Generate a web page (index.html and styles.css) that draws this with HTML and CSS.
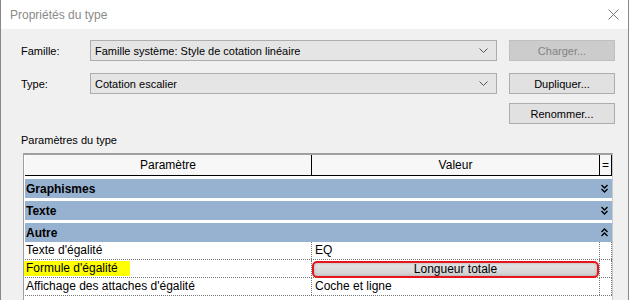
FILE: index.html
```html
<!DOCTYPE html>
<html lang="fr">
<head>
  <meta charset="UTF-8" />
  <title>Propriétés du type</title>
  <link rel="stylesheet" href="styles.css">
</head>
<body>

<div class="dialog">
  <!-- Title bar -->
  <div class="titlebar">
    <span class="title">Propriétés du type</span>
    <svg class="close" width="11" height="11" viewBox="0 0 11 11">
      <path d="M0.5 0.5 L10.5 10.5 M10.5 0.5 L0.5 10.5" stroke="#777" stroke-width="1" fill="none"/>
    </svg>
  </div>

  <div class="content">
    <!-- Family / type selection -->
    <div class="form">
      <label>Famille:</label>
      <div class="combo">
        <span>Famille système: Style de cotation linéaire</span>
        <svg width="9" height="5" viewBox="0 0 9 5"><path d="M0.5 0.5 L4.5 4.5 L8.5 0.5" stroke="#555" fill="none"/></svg>
      </div>
      <button class="button" disabled>Charger...</button>

      <label>Type:</label>
      <div class="combo">
        <span>Cotation escalier</span>
        <svg width="9" height="5" viewBox="0 0 9 5"><path d="M0.5 0.5 L4.5 4.5 L8.5 0.5" stroke="#555" fill="none"/></svg>
      </div>
      <button class="button">Dupliquer...</button>

      <span></span><span></span>
      <button class="button rename">Renommer...</button>
    </div>

    <div class="section-label">Paramètres du type</div>

    <!-- Property grid -->
    <div class="props">
      <div class="props-head">
        <div class="hcell">Paramètre</div>
        <div class="hcell">Valeur</div>
        <div class="hcell">=</div>
      </div>

      <div class="group">
        <span>Graphismes</span>
        <svg class="toggle" width="7" height="9" viewBox="0 0 7 9"><path d="M0.5 1 L3.5 4 L6.5 1 M0.5 5 L3.5 8 L6.5 5" stroke="#000" stroke-width="1.4" fill="none"/></svg>
      </div>
      <div class="group">
        <span>Texte</span>
        <svg class="toggle" width="7" height="9" viewBox="0 0 7 9"><path d="M0.5 1 L3.5 4 L6.5 1 M0.5 5 L3.5 8 L6.5 5" stroke="#000" stroke-width="1.4" fill="none"/></svg>
      </div>
      <div class="group">
        <span>Autre</span>
        <svg class="toggle" width="7" height="9" viewBox="0 0 7 9"><path d="M0.5 4 L3.5 1 L6.5 4 M0.5 8 L3.5 5 L6.5 8" stroke="#000" stroke-width="1.4" fill="none"/></svg>
      </div>

      <div class="row">
        <div class="cell">Texte d'égalité</div>
        <div class="cell value">EQ</div>
        <div class="cell"></div>
      </div>
      <div class="row">
        <div class="cell"><span class="marked">Formule d'égalité</span></div>
        <div class="cell"><div class="value-btn">Longueur totale</div></div>
        <div class="cell"></div>
      </div>
      <div class="row">
        <div class="cell">Affichage des attaches d'égalité</div>
        <div class="cell value">Coche et ligne</div>
        <div class="cell"></div>
      </div>
    </div>
  </div>
</div>

</body>
</html>
```

FILE: styles.css
```css
body {
  margin: 0;
  width: 629px;
  height: 300px;
  overflow: hidden;
  font-family: 'Liberation Sans', Arial, sans-serif;
  font-size: 11px;
  color: #000;
  background: #fff;
}
.dialog {
  width: 627px;
  height: 300px;
  overflow: hidden;
  border-left: 1px solid #888;
  border-right: 1px solid #888;
  background: #f0f0f0;
}
.titlebar {
  height: 29px;
  background: #fff;
  display: flex;
  align-items: center;
  justify-content: space-between;
  padding: 0 9px;
}
.title {
  color: #8a8a8a;
  font-size: 12px;
}
.content {
  padding: 11px 0 0 20px;
}
.form {
  display: grid;
  grid-template-columns: 69px 407px 118px;
  grid-template-rows: 21px 21px 21px;
  row-gap: 12px;
  align-items: center;
}
.combo {
  height: 21px;
  box-sizing: border-box;
  background: #e5e5e5;
  border: 1px solid #adadad;
  display: flex;
  align-items: center;
  justify-content: space-between;
  padding: 0 8px 0 4px;
}
.button {
  justify-self: end;
  width: 106px;
  height: 21px;
  box-sizing: border-box;
  background: #e1e1e1;
  border: 1px solid #adadad;
  font-family: inherit;
  font-size: 11px;
  color: #000;
  padding: 0;
}
.button:disabled {
  background: #cccccc;
  border-color: #bfbfbf;
  color: #838383;
}
.rename {
  align-self: start;
  margin-top: -3px;
}
.section-label {
  margin-top: 6px;
  height: 14px;
  line-height: 14px;
  margin-bottom: 6px;
}
.props {
  margin-left: 2px;
  width: 590px;
  height: 147px;
  box-sizing: border-box;
  overflow: hidden;
  background: #fff;
  border-top: 2px solid #a0a0a0;
  border-left: 1px solid #a0a0a0;
  border-right: 1px solid #c8c8c8;
  padding-left: 1px;
}
.props-head {
  display: grid;
  grid-template-columns: 287px 288px 1fr;
  height: 21px;
  box-sizing: border-box;
  background: #f7f7f7;
  border-bottom: 1px solid #000;
}
.hcell {
  text-align: center;
  line-height: 20px;
  font-size: 12px;
  border-right: 1px solid #000;
}
.group {
  margin-top: 3px;
  height: 19px;
  background: #97b2d0;
  display: flex;
  align-items: center;
  justify-content: space-between;
  padding: 0 4px 0 1px;
  font-weight: bold;
  font-size: 12px;
}
.row {
  display: grid;
  grid-template-columns: 287px 288px 1fr;
  height: 18px;
  box-sizing: border-box;
  border-bottom: 1px dotted #777;
}
.cell {
  line-height: 17px;
  padding-left: 1px;
  border-right: 1px dotted #777;
  white-space: nowrap;
  font-size: 12px;
}
.cell.value {
  padding-left: 3px;
}
.marked {
  display: inline-block;
  background: #ffff00;
  margin-left: -4px;
  padding: 0 12px 0 4px;
  line-height: 15px;
}
.value-btn {
  height: 17px;
  box-sizing: border-box;
  margin: 1px 0 0 -1px;
  border: 2px solid #e8141b;
  border-radius: 5px;
  background: linear-gradient(#e6e6e6, #d0d0d0);
  box-shadow: inset 0 0 3px #a8a8a8;
  text-align: center;
  line-height: 13px;
}
```
